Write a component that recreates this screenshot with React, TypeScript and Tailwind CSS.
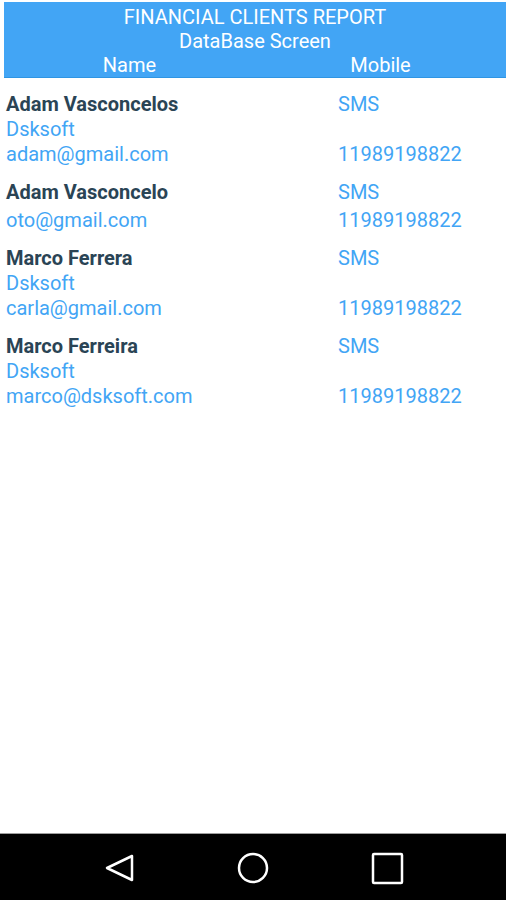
const clients = [
  { name: 'Adam Vasconcelos', company: 'Dsksoft', email: 'adam@gmail.com', phone: '11989198822' },
  { name: 'Adam Vasconcelo', company: '', email: 'oto@gmail.com', phone: '11989198822' },
  { name: 'Marco Ferrera', company: 'Dsksoft', email: 'carla@gmail.com', phone: '11989198822' },
  { name: 'Marco Ferreira', company: 'Dsksoft', email: 'marco@dsksoft.com', phone: '11989198822' },
];

export default function App() {
  return (
    <div
      className="w-[506px] h-[900px] bg-white flex flex-col overflow-hidden"
      style={{ fontFamily: 'Roboto, "Noto Sans", sans-serif' }}
    >
      <div className="ml-[4px] mt-[2px] h-[76px] bg-[#42a5f5] text-white text-[20px] leading-[24px] pt-[3px] border-b border-[#2f95e3]">
        <div className="text-center">FINANCIAL CLIENTS REPORT</div>
        <div className="text-center">DataBase Screen</div>
        <div className="grid grid-cols-2 text-center">
          <div>Name</div>
          <div>Mobile</div>
        </div>
      </div>

      <div className="flex-1 pt-[14px] pl-[6px] flex flex-col gap-[13px] text-[20px] leading-[25px]">
        {clients.map((c, i) => (
          <div key={i} className="grid grid-cols-[332px_1fr]">
            <div className="font-bold text-[#2a4455]">{c.name}</div>
            <div className="text-[#42a5f5]">SMS</div>
            {c.company ? (
              <>
                <div className="text-[#42a5f5]">{c.company}</div>
                <div />
              </>
            ) : (
              <div className="col-span-2 h-[3px]" />
            )}
            <div className="text-[#42a5f5]">{c.email}</div>
            <div className="text-[#42a5f5]">{c.phone}</div>
          </div>
        ))}
      </div>

      <div className="h-[67px] bg-black border-t border-[#9e9e9e] flex items-center">
        <svg width="506" height="66" viewBox="0 0 506 66" fill="none" stroke="white" strokeWidth="2.5" strokeLinejoin="round">
          <path d="M132 22 L107 34 L132 46 Z" />
          <circle cx="253" cy="34" r="14" />
          <rect x="373" y="20" width="29" height="29" rx="1" />
        </svg>
      </div>
    </div>
  );
}
